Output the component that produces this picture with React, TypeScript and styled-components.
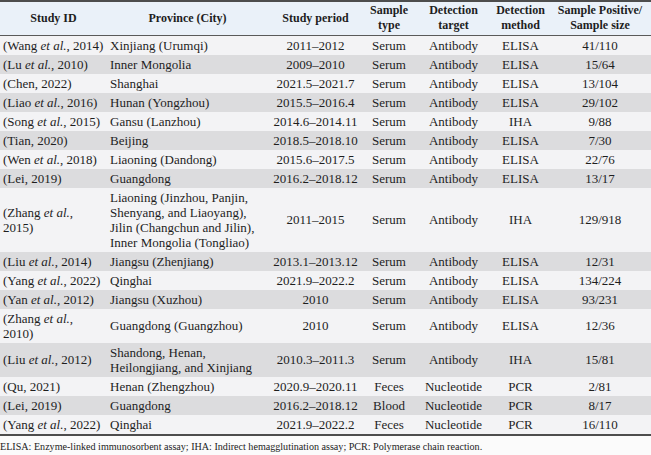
import styled, { createGlobalStyle } from "styled-components";

const GlobalStyle = createGlobalStyle`
  html, body {
    margin: 0;
    padding: 0;
    background: #fbfbfb;
  }
  body {
    font-family: "Liberation Serif", "Times New Roman", serif;
    color: #1e1e1e;
  }
`;

const Wrapper = styled.div`
  width: 651px;
`;

const Table = styled.table`
  width: 651px;
  table-layout: fixed;
  border-collapse: collapse;
  font-size: 13px;
  line-height: 15px;
  border-top: 2px solid #4d4d4d;
  border-bottom: 2px solid #4d4d4d;
`;

const HeadRow = styled.tr`
  height: 34px;
  background: #eaf1f9;
  border-bottom: 1px solid #5a5a5a;
`;

const HeadCell = styled.th<{ $align?: string }>`
  font-size: 12px;
  line-height: 15px;
  font-weight: bold;
  text-align: ${(p) => p.$align || "center"};
  vertical-align: middle;
  padding: 1px 1px;
  white-space: nowrap;
`;

const Row = styled.tr<{ $shade: boolean }>`
  background: ${(p) => (p.$shade ? "#dcdcde" : "#f3f3f5")};
`;

const Cell = styled.td<{ $align?: string }>`
  text-align: ${(p) => p.$align || "center"};
  vertical-align: middle;
  padding: 2px 3px;
`;

const Footnote = styled.p`
  margin: 5px 0 0 0;
  font-size: 10.1px;
  line-height: 12px;
  color: #222;
`;

interface IStudy {
  author: string;
  etal: boolean;
  year: string;
  place: string[];
  period: string;
  sample: string;
  target: string;
  method: string;
  result: string;
}

const studies: IStudy[] = [
  { author: "Wang", etal: true, year: "2014", place: ["Xinjiang (Urumqi)"], period: "2011–2012", sample: "Serum", target: "Antibody", method: "ELISA", result: "41/110" },
  { author: "Lu", etal: true, year: "2010", place: ["Inner Mongolia"], period: "2009–2010", sample: "Serum", target: "Antibody", method: "ELISA", result: "15/64" },
  { author: "Chen", etal: false, year: "2022", place: ["Shanghai"], period: "2021.5–2021.7", sample: "Serum", target: "Antibody", method: "ELISA", result: "13/104" },
  { author: "Liao", etal: true, year: "2016", place: ["Hunan (Yongzhou)"], period: "2015.5–2016.4", sample: "Serum", target: "Antibody", method: "ELISA", result: "29/102" },
  { author: "Song", etal: true, year: "2015", place: ["Gansu (Lanzhou)"], period: "2014.6–2014.11", sample: "Serum", target: "Antibody", method: "IHA", result: "9/88" },
  { author: "Tian", etal: false, year: "2020", place: ["Beijing"], period: "2018.5–2018.10", sample: "Serum", target: "Antibody", method: "ELISA", result: "7/30" },
  { author: "Wen", etal: true, year: "2018", place: ["Liaoning (Dandong)"], period: "2015.6–2017.5", sample: "Serum", target: "Antibody", method: "ELISA", result: "22/76" },
  { author: "Lei", etal: false, year: "2019", place: ["Guangdong"], period: "2016.2–2018.12", sample: "Serum", target: "Antibody", method: "ELISA", result: "13/17" },
  {
    author: "Zhang", etal: true, year: "2015",
    place: ["Liaoning (Jinzhou, Panjin,", "Shenyang, and Liaoyang),", "Jilin (Changchun and Jilin),", "Inner Mongolia (Tongliao)"],
    period: "2011–2015", sample: "Serum", target: "Antibody", method: "IHA", result: "129/918",
  },
  { author: "Liu", etal: true, year: "2014", place: ["Jiangsu (Zhenjiang)"], period: "2013.1–2013.12", sample: "Serum", target: "Antibody", method: "ELISA", result: "12/31" },
  { author: "Yang", etal: true, year: "2022", place: ["Qinghai"], period: "2021.9–2022.2", sample: "Serum", target: "Antibody", method: "ELISA", result: "134/224" },
  { author: "Yan", etal: true, year: "2012", place: ["Jiangsu (Xuzhou)"], period: "2010", sample: "Serum", target: "Antibody", method: "ELISA", result: "93/231" },
  { author: "Zhang", etal: true, year: "2010", place: ["Guangdong (Guangzhou)"], period: "2010", sample: "Serum", target: "Antibody", method: "ELISA", result: "12/36" },
  { author: "Liu", etal: true, year: "2012", place: ["Shandong, Henan,", "Heilongjiang, and Xinjiang"], period: "2010.3–2011.3", sample: "Serum", target: "Antibody", method: "IHA", result: "15/81" },
  { author: "Qu", etal: false, year: "2021", place: ["Henan (Zhengzhou)"], period: "2020.9–2020.11", sample: "Feces", target: "Nucleotide", method: "PCR", result: "2/81" },
  { author: "Lei", etal: false, year: "2019", place: ["Guangdong"], period: "2016.2–2018.12", sample: "Blood", target: "Nucleotide", method: "PCR", result: "8/17" },
  { author: "Yang", etal: true, year: "2022", place: ["Qinghai"], period: "2021.9–2022.2", sample: "Feces", target: "Nucleotide", method: "PCR", result: "16/110" },
];

const widths = [107, 161, 95, 52, 77, 57, 102];

function App() {
  return (
    <Wrapper>
      <GlobalStyle />
      <Table>
        <colgroup>
          {widths.map((w, i) => (
            <col key={i} style={{ width: w }} />
          ))}
        </colgroup>
        <thead>
          <HeadRow>
            <HeadCell>Study ID</HeadCell>
            <HeadCell>Province (City)</HeadCell>
            <HeadCell>Study period</HeadCell>
            <HeadCell>Sample<br />type</HeadCell>
            <HeadCell>Detection<br />target</HeadCell>
            <HeadCell>Detection<br />method</HeadCell>
            <HeadCell>Sample Positive/<br />Sample size</HeadCell>
          </HeadRow>
        </thead>
        <tbody>
          {studies.map((s, i) => (
            <Row key={i} $shade={i % 2 === 1}>
              <Cell $align="left">
                ({s.author}
                {s.etal ? <> <i>et al.</i>,</> : ","} {s.year})
              </Cell>
              <Cell $align="left">
                {s.place.map((line, j) => (
                  <span key={j}>
                    {j > 0 && <br />}
                    {line}
                  </span>
                ))}
              </Cell>
              <Cell>{s.period}</Cell>
              <Cell>{s.sample}</Cell>
              <Cell>{s.target}</Cell>
              <Cell>{s.method}</Cell>
              <Cell>{s.result}</Cell>
            </Row>
          ))}
        </tbody>
      </Table>
      <Footnote>
        ELISA: Enzyme-linked immunosorbent assay; IHA: Indirect hemagglutination assay; PCR: Polymerase chain reaction.
      </Footnote>
    </Wrapper>
  );
}

export default App;
